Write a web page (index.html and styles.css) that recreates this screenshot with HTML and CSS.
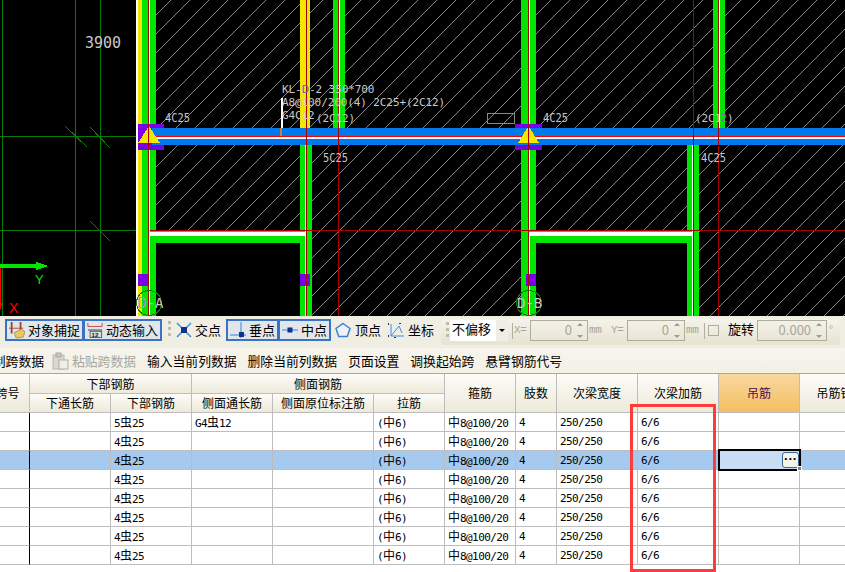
FILE: index.html
```html
<!DOCTYPE html>
<html lang="en">
<head>
    <meta charset="UTF-8">
    <meta name="viewport" content="width=device-width, initial-scale=1.0">
    <title>梁平法表格</title>
    <link rel="stylesheet" href="styles.css">
</head>
<body>
<div class="app">
    <!-- CAD drawing -->
    <svg class="cad" width="845" height="316" viewBox="0 0 845 316">
        <defs>
            <pattern id="hatch" patternUnits="userSpaceOnUse" width="19" height="19">
                <line class="hatch-line" x1="0" y1="19" x2="19" y2="0"/>
            </pattern>
        </defs>
        <rect x="156" y="0" width="689" height="316" fill="url(#hatch)"/>
        <rect x="156" y="243" width="144" height="73" fill="#000"/>
        <rect x="536" y="243" width="151" height="73" fill="#000"/>

        <!-- axis lines on the left -->
        <g class="axis">
            <line x1="2.5" y1="0" x2="2.5" y2="316"/>
            <line x1="75.5" y1="0" x2="75.5" y2="316"/>
            <line x1="100.5" y1="0" x2="100.5" y2="316"/>
            <line x1="0" y1="136.5" x2="137" y2="136.5"/>
            <line x1="0" y1="230.5" x2="137" y2="230.5"/>
            <line x1="65" y1="126" x2="87" y2="147"/>
            <line x1="90" y1="127" x2="110" y2="148"/>
            <line x1="90" y1="221" x2="110" y2="241"/>
        </g>

        <!-- columns and beams -->
        <rect x="136" y="0" width="2" height="316" fill="#fff"/>
        <rect x="138" y="0" width="4" height="316" fill="#f5e600"/>
        <rect x="142" y="0" width="6" height="316" fill="#00e600"/>
        <rect x="148" y="0" width="2" height="316" fill="#fff"/>
        <rect x="150" y="0" width="6" height="316" fill="#00e600"/>

        <rect x="300" y="0" width="10" height="128" fill="#f5e600"/>
        <rect x="300" y="145" width="12" height="171" fill="#00e600"/>
        <rect x="305" y="145" width="2" height="171" fill="#fff"/>
        <rect x="333" y="0" width="12" height="128" fill="#00e600"/>
        <rect x="339" y="0" width="1" height="128" fill="#fff"/>

        <rect x="521" y="0" width="15" height="316" fill="#00e600"/>
        <rect x="528" y="0" width="2" height="316" fill="#fff"/>
        <rect x="687" y="145" width="12" height="171" fill="#00e600"/>
        <rect x="692" y="145" width="2" height="171" fill="#fff"/>
        <rect x="713" y="0" width="12" height="128" fill="#00e600"/>
        <rect x="718" y="0" width="2" height="128" fill="#fff"/>

        <rect x="150" y="232" width="155" height="4" fill="#fff"/>
        <rect x="150" y="236" width="150" height="7" fill="#00e600"/>
        <rect x="529" y="232" width="163" height="4" fill="#fff"/>
        <rect x="536" y="236" width="151" height="7" fill="#00e600"/>
        <rect x="150" y="230" width="155" height="2" fill="#00e600"/>
        <rect x="529" y="230" width="163" height="2" fill="#00e600"/>

        <rect x="138" y="124" width="26" height="26" fill="#7a00e6"/>
        <rect x="515" y="124" width="27" height="26" fill="#7a00e6"/>
        <rect x="138" y="274" width="10" height="12" fill="#7a00e6"/>
        <rect x="300" y="274" width="10" height="12" fill="#7a00e6"/>
        <rect x="526" y="274" width="10" height="12" fill="#7a00e6"/>

        <rect x="152" y="128" width="693" height="17" fill="#0078ee"/>
        <rect x="150" y="137" width="695" height="2" fill="#fff"/>
        <rect x="150" y="136" width="695" height="1" fill="#f00"/>
        <path d="M149 126 L160 143 L138 143 Z" fill="#f5e600"/>
        <path d="M528.5 126 L539 143 L518 143 Z" fill="#f5e600"/>

        <!-- red grid lines -->
        <g class="grid-red">
            <line x1="148.5" y1="0" x2="148.5" y2="316"/>
            <line x1="306.5" y1="0" x2="306.5" y2="316"/>
            <line x1="338.5" y1="0" x2="338.5" y2="316"/>
            <line x1="528.5" y1="0" x2="528.5" y2="316"/>
            <line x1="693.5" y1="0" x2="693.5" y2="316"/>
            <line x1="718.5" y1="0" x2="718.5" y2="316"/>
            <line x1="150" y1="230.5" x2="845" y2="230.5"/>
        </g>

        <!-- leader and small marks -->
        <rect x="281" y="98" width="2" height="30" fill="#fff"/>
        <rect x="280" y="128" width="2" height="8" fill="#e87820"/>
        <rect class="mark" x="487.5" y="113.5" width="27" height="10"/>

        <circle class="axis-circle" cx="149" cy="303" r="12.5"/>
        <circle class="axis-circle" cx="529" cy="303" r="12.5"/>

        <!-- coordinate marker -->
        <rect x="0" y="264" width="38" height="4" fill="#00e600"/>
        <path d="M36 262 L48 266 L36 270 Z" fill="#00e600"/>
        <text class="axis-y" x="35" y="284">Y</text>
        <rect x="0" y="268" width="1" height="38" fill="#f00"/>
        <path d="M0 303 L3 303 L0 310 Z" fill="#f00"/>
        <text class="axis-x" x="9" y="313">X</text>

        <!-- labels -->
        <text class="dim" x="85" y="48">3900</text>
        <text class="lbl" x="165" y="122" textLength="25" lengthAdjust="spacingAndGlyphs">4C25</text>
        <text class="lbl-sm" x="282" y="93">KL-<tspan fill="#5a5ad8">D</tspan>-2 350*700</text>
        <text class="lbl-sm" x="282" y="106">A8@100/200(4) 2C25+(2C12)</text>
        <text class="lbl-sm" x="282" y="119">G4C12</text>
        <text class="lbl-sm" x="316" y="122">(2C12)</text>
        <text class="lbl" x="323" y="162" textLength="25" lengthAdjust="spacingAndGlyphs">5C25</text>
        <text class="lbl" x="543" y="122" textLength="25" lengthAdjust="spacingAndGlyphs">4C25</text>
        <text class="lbl-sm" x="695" y="122">(2C1<tspan fill="#d040d0">2</tspan>)</text>
        <text class="lbl" x="701" y="162" textLength="25" lengthAdjust="spacingAndGlyphs">4C25</text>
        <text class="lbl-big" x="137" y="308"><tspan fill="#b888e8">D</tspan>-A</text>
        <text class="lbl-big" x="517" y="308">D-B</text>
    </svg>

    <!-- snap toolbar -->
    <div class="snapbar">
        <div class="strip">
            <button class="tool on wide">
                <svg width="18" height="18" viewBox="0 0 18 18">
                    <path d="M3 0V13M13 0V9" stroke="#a04030" stroke-width="2" fill="none"/>
                    <path d="M0 7H16" stroke="#a04030" stroke-width="1"/>
                    <path d="M6 12L14 8L18 11L16 17L8 18Z" fill="#e8c860" stroke="#b09040" stroke-width="1"/>
                </svg>
                对象捕捉
            </button>
            <button class="tool on wide">
                <svg width="18" height="18" viewBox="0 0 18 18">
                    <path d="M1 1V5H17V1" stroke="#c04040" stroke-width="1" fill="none"/>
                    <rect x="1" y="8" width="16" height="2" fill="#888"/>
                    <rect x="3.5" y="10.5" width="13" height="7" fill="#ddd" stroke="#555" stroke-width="1"/>
                    <text class="mini" x="5" y="16.5">12</text>
                </svg>
                动态输入
            </button>
            <span class="grip"></span>
            <button class="tool gap-right">
                <svg width="16" height="16" viewBox="0 0 16 16">
                    <path d="M1 1L15 15M15 1L1 15" stroke="#3f8fe8" stroke-width="1.5"/>
                    <rect x="5" y="5" width="6" height="6" fill="#12308a"/>
                </svg>
                交点
            </button>
            <button class="tool on">
                <svg width="16" height="16" viewBox="0 0 16 16">
                    <path d="M0 13H16M11 0V16" stroke="#6fa4e0" stroke-width="1.5"/>
                    <rect x="9" y="10" width="5" height="5" fill="#12308a"/>
                </svg>
                垂点
            </button>
            <button class="tool on">
                <svg width="16" height="16" viewBox="0 0 16 16">
                    <path d="M0 8H16" stroke="#6fa4e0" stroke-width="1.5"/>
                    <rect x="5.5" y="5.5" width="5" height="5" fill="#12308a"/>
                </svg>
                中点
            </button>
            <button class="tool vertex">
                <svg width="16" height="16" viewBox="0 0 16 16">
                    <path d="M8 1.5L15 6.5L12.3 14.5H3.7L1 6.5Z" stroke="#3f7fd8" stroke-width="1.5" fill="#eef3fa"/>
                </svg>
                顶点
            </button>
            <button class="tool coord">
                <svg width="18" height="18" viewBox="0 0 18 18">
                    <path d="M5 3V15H18M5 15L13 5L16 12" stroke="#3f8fe8" stroke-width="1" fill="none"/>
                    <path d="M2 3H3M2 15H3M14 2V3M9 16V17" stroke="#333" stroke-width="2"/>
                </svg>
                坐标
            </button>
        </div>
        <div class="strip offset">
            <span class="grip grip-start"></span>
            <div class="select">不偏移<span class="select-arrow"></span></div>
            <span class="sep"></span>
            <span class="mono x-label">X=</span>
            <div class="spin"><span>0</span><span class="arrows"></span></div>
            <span class="mono unit">mm</span>
            <span class="mono y-label">Y=</span>
            <div class="spin"><span>0</span><span class="arrows"></span></div>
            <span class="mono unit">mm</span>
            <span class="sep"></span>
            <span class="check"></span>
            <span class="rotate">旋转</span>
            <div class="spin spin-wide"><span>0.000</span><span class="arrows"></span></div>
            <span class="degree">°</span>
        </div>
    </div>

    <!-- table actions -->
    <div class="actionbar">
        <span class="action first">复制跨数据</span>
        <span class="action disabled">
            <svg width="17" height="18" viewBox="0 0 17 18">
                <rect x="1" y="3" width="11" height="14" fill="#d8d8d0" stroke="#b8b8b0"/>
                <rect x="4" y="1" width="5" height="4" fill="#c8c8c0" stroke="#a8a8a0"/>
                <rect x="7" y="8" width="9" height="9" fill="#eeeeea" stroke="#b0b0a8"/>
            </svg>
            粘贴跨数据
        </span>
        <span class="action">输入当前列数据</span>
        <span class="action">删除当前列数据</span>
        <span class="action">页面设置</span>
        <span class="action">调换起始跨</span>
        <span class="action">悬臂钢筋代号</span>
    </div>

    <!-- rebar table -->
    <table class="sheet">
        <colgroup>
            <col class="c43"><col class="c81"><col class="c81"><col class="c81"><col class="c101"><col class="c71"><col class="c71"><col class="c41"><col class="c81"><col class="c81"><col class="c81"><col class="c82">
        </colgroup>
        <thead>
            <tr class="head-top">
                <th rowspan="2">跨号</th>
                <th colspan="2">下部钢筋</th>
                <th colspan="3">侧面钢筋</th>
                <th rowspan="2">箍筋</th>
                <th rowspan="2">肢数</th>
                <th rowspan="2">次梁宽度</th>
                <th rowspan="2">次梁加筋</th>
                <th rowspan="2" class="active">吊筋</th>
                <th rowspan="2">吊筋锚固</th>
            </tr>
            <tr>
                <th>下通长筋</th>
                <th>下部钢筋</th>
                <th>侧面通长筋</th>
                <th>侧面原位标注筋</th>
                <th>拉筋</th>
            </tr>
        </thead>
        <tbody>
            <tr><td></td><td></td><td>5<span class="sym">虫</span>25</td><td>G4<span class="sym">虫</span>12</td><td></td><td>(<span class="sym">中</span>6)</td><td><span class="sym">中</span>8@100/20</td><td>4</td><td>250/250</td><td>6/6</td><td></td><td></td></tr>
            <tr><td></td><td></td><td>4<span class="sym">虫</span>25</td><td></td><td></td><td>(<span class="sym">中</span>6)</td><td><span class="sym">中</span>8@100/20</td><td>4</td><td>250/250</td><td>6/6</td><td></td><td></td></tr>
            <tr class="selected"><td></td><td></td><td>4<span class="sym">虫</span>25</td><td></td><td></td><td>(<span class="sym">中</span>6)</td><td><span class="sym">中</span>8@100/20</td><td>4</td><td>250/250</td><td>6/6</td><td class="editing"><div class="editor"><span class="dots">···</span></div><span class="handle"></span></td><td></td></tr>
            <tr><td></td><td></td><td>4<span class="sym">虫</span>25</td><td></td><td></td><td>(<span class="sym">中</span>6)</td><td><span class="sym">中</span>8@100/20</td><td>4</td><td>250/250</td><td>6/6</td><td></td><td></td></tr>
            <tr><td></td><td></td><td>4<span class="sym">虫</span>25</td><td></td><td></td><td>(<span class="sym">中</span>6)</td><td><span class="sym">中</span>8@100/20</td><td>4</td><td>250/250</td><td>6/6</td><td></td><td></td></tr>
            <tr><td></td><td></td><td>4<span class="sym">虫</span>25</td><td></td><td></td><td>(<span class="sym">中</span>6)</td><td><span class="sym">中</span>8@100/20</td><td>4</td><td>250/250</td><td>6/6</td><td></td><td></td></tr>
            <tr><td></td><td></td><td>4<span class="sym">虫</span>25</td><td></td><td></td><td>(<span class="sym">中</span>6)</td><td><span class="sym">中</span>8@100/20</td><td>4</td><td>250/250</td><td>6/6</td><td></td><td></td></tr>
            <tr><td></td><td></td><td>4<span class="sym">虫</span>25</td><td></td><td></td><td>(<span class="sym">中</span>6)</td><td><span class="sym">中</span>8@100/20</td><td>4</td><td>250/250</td><td>6/6</td><td></td><td></td></tr>
        </tbody>
    </table>

    <!-- red annotation box -->
    <div class="callout"></div>
</div>
</body>
</html>
```

FILE: styles.css
```css
/* Basic reset */
* {
    margin: 0;
    padding: 0;
    box-sizing: border-box;
    font-family: "Noto Sans CJK SC", "Liberation Sans", sans-serif;
}

body {
    background-color: #fff;
    overflow: hidden;
}

.app {
    position: relative;
    width: 845px;
    height: 572px;
    overflow: hidden;
    color: #000;
}

/* CAD drawing */
.cad {
    display: block;
    background-color: #000;
    shape-rendering: crispEdges;
}

.hatch-line {
    stroke: #c0c0c0;
    stroke-width: 0.7;
}

.axis line {
    stroke: #0a7a0a;
    stroke-width: 1;
}

.grid-red line {
    stroke: #a80000;
    stroke-width: 1;
}

.mark {
    fill: none;
    stroke: #888;
}

.axis-circle {
    fill: none;
    stroke: #0a7a0a;
}

.cad text {
    font-family: "DejaVu Sans Mono", monospace;
    fill: #c8c8c8;
}

.cad .axis-y {
    font-family: "Liberation Sans", sans-serif;
    font-size: 13px;
    fill: #00e600;
}

.cad .axis-x {
    font-family: "Liberation Sans", sans-serif;
    font-size: 14px;
    fill: #f00;
}

.dim {
    font-size: 15px;
}

.lbl {
    font-size: 12.5px;
}

.lbl-sm {
    font-size: 11px;
    letter-spacing: -0.1px;
}

.lbl-big {
    font-size: 14px;
}

/* Snap toolbar */
.snapbar {
    display: flex;
    height: 32px;
    padding: 3px 5px 0;
    background-color: #f0eee3;
    font-size: 13px;
}

.strip {
    display: flex;
    align-items: flex-start;
    height: 24px;
}

.offset {
    flex: 1;
    height: 26px;
    margin-left: 5px;
    padding-top: 1px;
    border-radius: 3px;
    background: linear-gradient(#f5f3ea, #e6e3d2);
}

.strip > * {
    flex: none;
}

.tool {
    display: flex;
    align-items: center;
    gap: 3px;
    height: 22px;
    border: 2px solid transparent;
    background: none;
    font-size: 13px;
    line-height: 18px;
    white-space: nowrap;
}

.tool.on {
    padding: 0 2px;
    border-color: #3a72c4;
    background-color: #e1e6ea;
}

.tool.on + .tool.on {
    margin-left: -1px;
}

.tool.wide {
    width: 79px;
}

.gap-right {
    margin-right: 3px;
}

.tool.vertex {
    gap: 4px;
    margin-left: 2px;
}

.tool.coord {
    gap: 4px;
    margin-left: 1px;
}

.grip {
    width: 3px;
    height: 18px;
    margin: 2px 3px 0 6px;
    background: repeating-linear-gradient(#bdbbae 0 3px, transparent 3px 6px);
}

.grip-start {
    margin: 2px 1px 0 5px;
}

.mini {
    font-family: "Liberation Sans", sans-serif;
    font-size: 7px;
    font-weight: bold;
    fill: #222;
}

.select {
    display: flex;
    justify-content: space-between;
    width: 58px;
    height: 21px;
    padding-left: 2px;
    background-color: #fff;
    line-height: 18px;
}

.select-arrow {
    position: relative;
    width: 12px;
    background-color: #eeeee6;
}

.select-arrow::after {
    content: "";
    position: absolute;
    left: 3px;
    top: 9px;
    border: 3px solid transparent;
    border-top: 3px solid #000;
}

.sep {
    width: 1px;
    height: 16px;
    margin: 3px 0 0 4px;
    background-color: #b0ae9e;
}

.mono {
    color: #a8a696;
    font-family: "Liberation Mono", monospace;
    font-size: 11px;
    letter-spacing: -0.5px;
    line-height: 20px;
}

.x-label {
    width: 17px;
    padding-left: 1px;
}

.unit {
    width: 15px;
    padding-left: 1px;
}

.y-label {
    width: 16px;
    margin-left: 8px;
}

.spin {
    display: flex;
    justify-content: flex-end;
    gap: 5px;
    width: 58px;
    height: 21px;
    padding-right: 3px;
    border: 1px solid #aeac9c;
    color: #a8a696;
    font-family: "Liberation Mono", monospace;
    font-size: 13px;
    line-height: 17px;
}

.spin-wide {
    width: 70px;
}

.arrows {
    position: relative;
    width: 7px;
}

.arrows::before,
.arrows::after {
    content: "";
    position: absolute;
    left: 0;
    border: 3.5px solid transparent;
}

.arrows::before {
    top: -1px;
    border-bottom-color: #999;
}

.arrows::after {
    bottom: -1px;
    border-top-color: #999;
}

.check {
    width: 11px;
    height: 11px;
    margin: 5px 9px 0 3px;
    border: 1px solid #aeac9c;
}

.rotate {
    margin-right: 3px;
    line-height: 18px;
    white-space: nowrap;
}

.degree {
    margin-left: 2px;
    color: #a8a696;
    font-size: 11px;
    line-height: 18px;
}

/* Action toolbar */
.actionbar {
    display: flex;
    align-items: center;
    gap: 11px;
    height: 25px;
    background: linear-gradient(#f6f4ec, #f3f1e6);
    font-size: 12.8px;
    white-space: nowrap;
    overflow: hidden;
}

.action {
    display: flex;
    align-items: center;
    gap: 3px;
}

.action.first {
    margin-left: -20px;
    margin-right: -3px;
}

.action.disabled {
    color: #a8a8a0;
}

/* Rebar table */
.sheet {
    width: 895px;
    margin-left: -14px;
    border-collapse: separate;
    border-spacing: 0;
    table-layout: fixed;
    border-top: 1px solid #8eaccc;
}

.c41 { width: 41px; }
.c43 { width: 44px; }
.c71 { width: 71px; }
.c81 { width: 81px; }
.c82 { width: 82px; }
.c101 { width: 101px; }

.sheet th {
    height: 19px;
    border-right: 1px solid #bdbdbd;
    border-bottom: 1px solid #bdbdbd;
    background: linear-gradient(#fdfcf8, #edead9);
    font-size: 12px;
    font-weight: normal;
    line-height: 14px;
    overflow: hidden;
    white-space: nowrap;
}

.head-top th {
    height: 20px;
}

.sheet th.active {
    background: linear-gradient(#f9d89e, #f2bf62);
    color: #4a0a5a;
}

.sheet td {
    position: relative;
    height: 19px;
    padding: 1px 0 0 3px;
    border-right: 1px solid #bdbdbd;
    border-bottom: 1px solid #bdbdbd;
    font-family: "DejaVu Sans Mono", "Noto Sans CJK SC", monospace;
    font-size: 11px;
    letter-spacing: -0.6px;
    line-height: 14px;
    white-space: nowrap;
    overflow: hidden;
}

.sheet td:first-child {
    border-right-color: #000;
}

.sym {
    font-family: "Noto Sans CJK SC", sans-serif;
    font-size: 12px;
    letter-spacing: 0;
}

.selected td {
    background-color: #a6c9ef;
}

.sheet td.editing {
    z-index: 2;
    overflow: visible;
}

.editor {
    position: absolute;
    left: -1px;
    top: -2px;
    width: 83px;
    height: 22px;
    border: 2px solid #000;
    background-color: #c8dcf4;
}

.dots {
    position: absolute;
    right: 0;
    top: 1px;
    width: 17px;
    height: 16px;
    border: 1px solid #3c6a96;
    border-radius: 3px;
    background-color: #f4f3ea;
    color: #000;
    font-family: "Liberation Sans", sans-serif;
    font-size: 13px;
    font-weight: bold;
    letter-spacing: 0;
    line-height: 12px;
    text-align: center;
}

.handle {
    position: absolute;
    right: -3px;
    bottom: -2px;
    width: 5px;
    height: 5px;
    border: 1px solid #fff;
    background-color: #808080;
}

/* Red annotation box */
.callout {
    position: absolute;
    left: 630px;
    top: 404px;
    width: 86px;
    height: 168px;
    border: 3px solid #ff3b3b;
}
```
